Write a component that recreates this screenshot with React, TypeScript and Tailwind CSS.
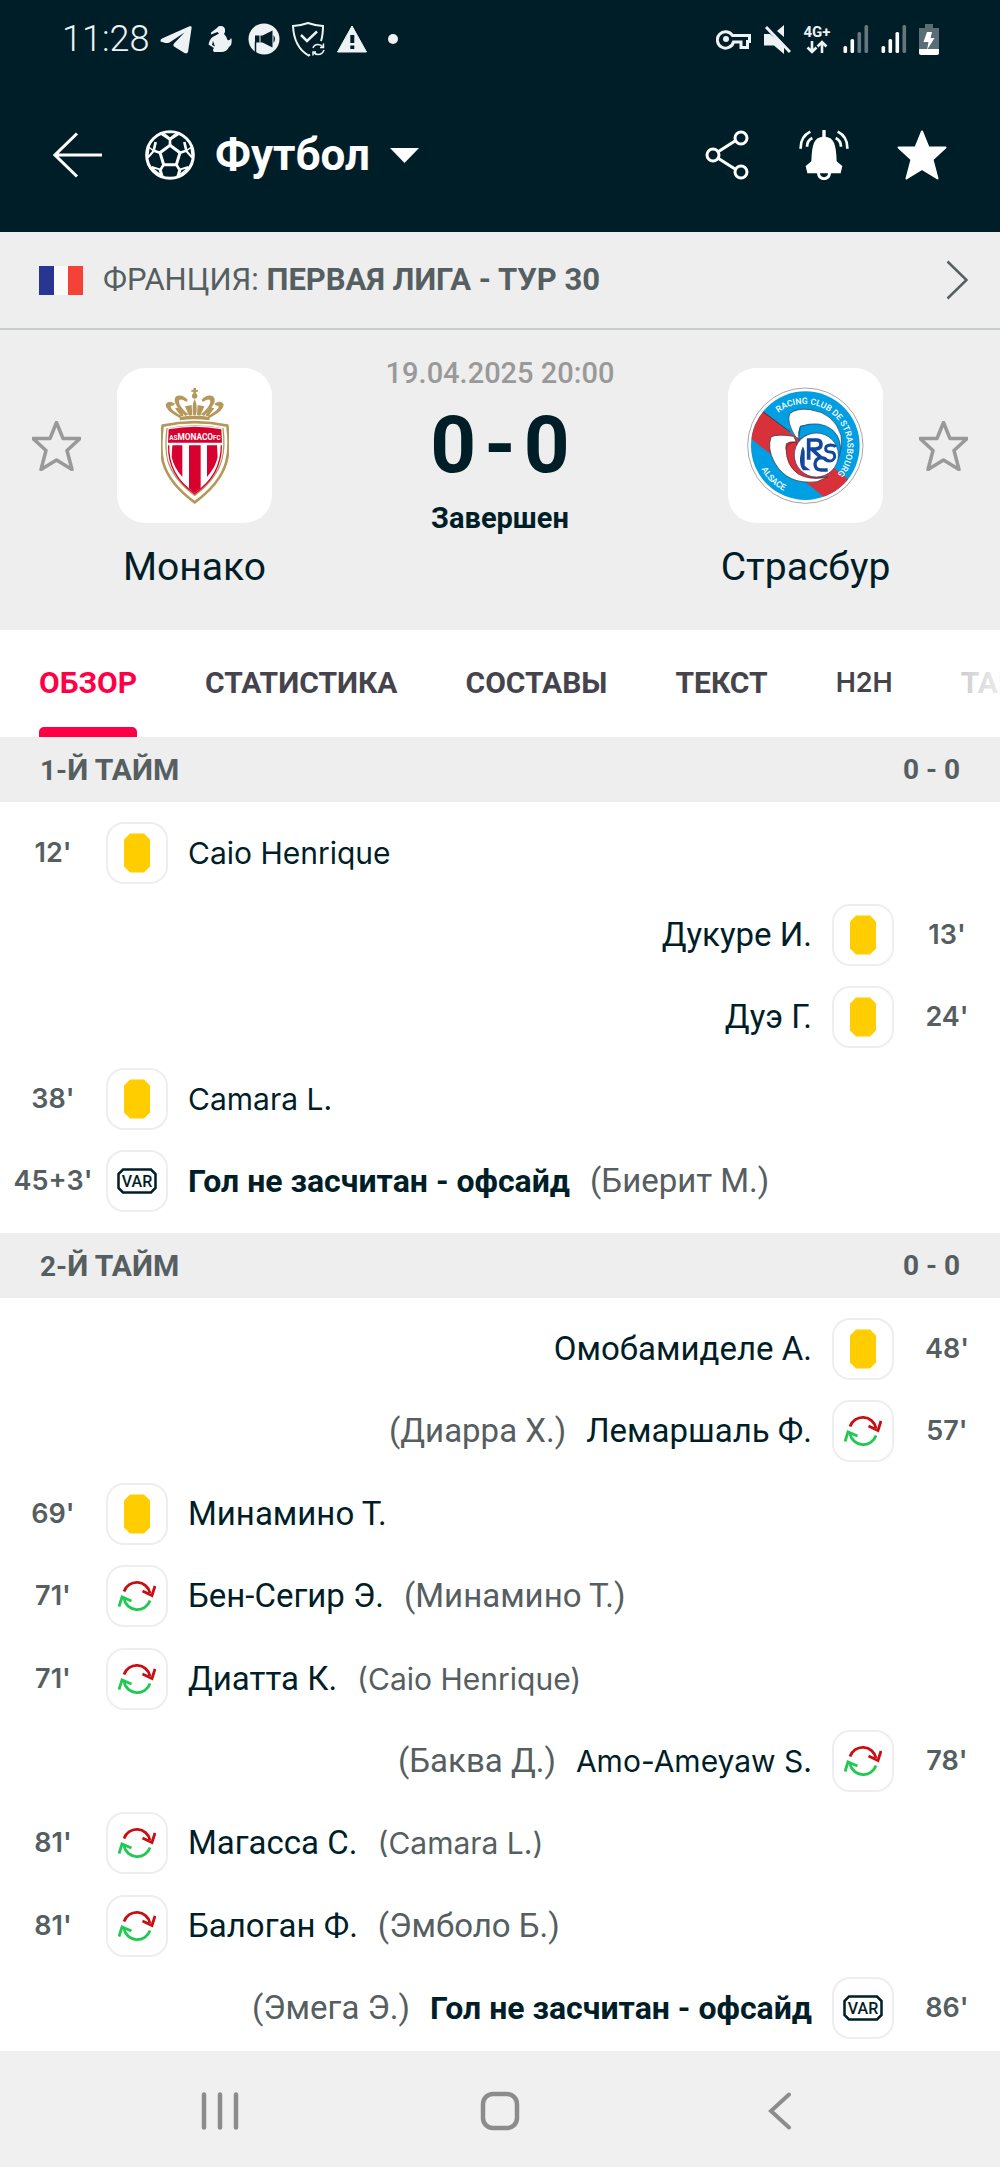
import { useState } from "react"

type Side = "home" | "away"
type Kind = "card" | "sub" | "var"

type MatchEvent = {
  side: Side
  time: string
  kind: Kind
  name: string
  extra?: string
}

const tabs = ["ОБЗОР", "СТАТИСТИКА", "СОСТАВЫ", "ТЕКСТ", "H2H", "ТАБЛИЦА"]

const firstHalf: MatchEvent[] = [
  { side: "home", time: "12'", kind: "card", name: "Caio Henrique" },
  { side: "away", time: "13'", kind: "card", name: "Дукуре И." },
  { side: "away", time: "24'", kind: "card", name: "Дуэ Г." },
  { side: "home", time: "38'", kind: "card", name: "Camara L." },
  { side: "home", time: "45+3'", kind: "var", name: "Гол не засчитан - офсайд", extra: "(Биерит М.)" },
]

const secondHalf: MatchEvent[] = [
  { side: "away", time: "48'", kind: "card", name: "Омобамиделе А." },
  { side: "away", time: "57'", kind: "sub", name: "Лемаршаль Ф.", extra: "(Диарра Х.)" },
  { side: "home", time: "69'", kind: "card", name: "Минамино Т." },
  { side: "home", time: "71'", kind: "sub", name: "Бен-Сегир Э.", extra: "(Минамино Т.)" },
  { side: "home", time: "71'", kind: "sub", name: "Диатта К.", extra: "(Caio Henrique)" },
  { side: "away", time: "78'", kind: "sub", name: "Amo-Ameyaw S.", extra: "(Баква Д.)" },
  { side: "home", time: "81'", kind: "sub", name: "Магасса С.", extra: "(Camara L.)" },
  { side: "home", time: "81'", kind: "sub", name: "Балоган Ф.", extra: "(Эмболо Б.)" },
  { side: "away", time: "86'", kind: "var", name: "Гол не засчитан - офсайд", extra: "(Эмега Э.)" },
]

const STAR = "M49 3 L62 35 L96 35 L70 59 L80 97 L49 78 L18 97 L28 59 L2 35 L36 35 Z"

// Latin names use a different face from Cyrillic ones
function textFace(text: string) {
  return /[А-Яа-я]/.test(text) ? "font-['Roboto',sans-serif] text-[33px]" : "font-['Inter',sans-serif] text-[30px]"
}

function Signal({ level }: { level: number }) {
  return (
    <svg viewBox="0 0 26 28" className="h-7 w-[26px]" fill="#fff">
      {[0, 1, 2, 3].map((i) => (
        <rect key={i} x={i * 7 + 0.5} y={21 - i * 7} width="3.6" height={7 + i * 7} rx="1.5" opacity={i < level ? 1 : 0.4} />
      ))}
    </svg>
  )
}

function StatusBar() {
  return (
    <div className="flex h-[78px] items-center justify-between pr-[61px] pl-[62px] text-[#eef2f5]">
      <div className="flex items-center gap-[10px]">
        <span className="text-[36px] font-light">11:28</span>
        <svg viewBox="0 0 34 34" className="h-[34px] w-[34px]" fill="currentColor">
          <path d="M1.500 19.500 Q1 17.500 3 16.500 L30.500 4.300 Q33.500 3.500 32.500 6.500 L29 30 Q28 32.300 25.500 31 L15 24.500 Q13.500 23 15 21.500 L25.500 10.500 L10.500 20.500 Q8 21.500 5.500 20.800 Z" />
        </svg>
        <svg viewBox="0 0 34 34" className="h-[34px] w-[34px]" fill="currentColor">
          <path d="M14 6 Q15 3.500 18 4 Q21.500 4 22 7.500 Q22.500 10 21 12 Q24 15 24.500 18 Q27 19 27.500 16.500 L28.500 16.500 Q29.500 23 26 25 Q24 30 18 30 L11 30 Q9 28 11 26 L5.500 22.500 Q7 15 12.500 13.500 L16 11.500 L14.500 10 L8 12.500 L8 10.500 Z" />
          <path d="M10 19 L9 23 L12 24.500 Z" fill="#001e28" />
        </svg>
        <svg viewBox="0 0 34 34" className="h-[34px] w-[34px]">
          <circle cx="17" cy="17" r="15.500" fill="currentColor" />
          <path d="M8 13.500 H12.500 V20.500 H8 Z M13.500 13.500 H15.500 L25.500 8.500 V25.500 L15.500 20.500 H13.500 Z" fill="#001e28" />
          <path d="M26.500 13 Q29.500 17 26.500 21 Z" fill="#001e28" />
          <path d="M8.500 20 V31" stroke="#001e28" strokeWidth="1.500" />
        </svg>
        <svg viewBox="0 0 34 36" className="h-9 w-[34px]" fill="none" stroke="currentColor" strokeWidth="2">
          <path d="M19 33.500 L17.500 34.500 Q3 26 2 5 Q10 4.500 17 2 Q24 4.500 32 5 Q32 14 30 20" />
          <path d="M10 14 L16 20 L26 10.500" strokeWidth="2.500" />
          <path d="M22 27 Q23 23.500 27 23.500 Q30 23.500 32 26 M33 29 Q31.500 33.500 27 33.500 Q24 33.500 22.500 31 M32.500 22.500 V26.500 H29 M22 34.500 V31 H25" strokeWidth="1.500" />
        </svg>
        <svg viewBox="0 0 34 34" className="h-[34px] w-[34px]">
          <path d="M17 4 L31.500 30 H2.500 Z" fill="currentColor" stroke="currentColor" strokeLinejoin="round" />
          <path d="M15.300 13 H19.300 V21 H15.300 Z M15.300 23.500 H19.300 V27 H15.300 Z" fill="#001e28" />
        </svg>
        <svg viewBox="0 0 28 28" className="h-7 w-7" fill="currentColor">
          <circle cx="14" cy="14" r="5" />
        </svg>
      </div>
      <div className="flex items-center gap-3">
        <svg viewBox="0 0 36 24" className="h-6 w-9" fill="none" stroke="currentColor" strokeWidth="3">
          <path d="M16.500 8.500 H33.500 V14.500 H31.500 V20.500 H25 V15 H17.500 A8.200 8.200 0 1 1 16.500 8.500 Z" />
          <circle cx="10" cy="12" r="3" fill="currentColor" stroke="none" />
        </svg>
        <svg viewBox="0 0 27 32" className="h-8 w-[27px]" fill="currentColor">
          <path d="M0 11 H6 L20 22 V31 L10 22.500 H0 Z M13 8 L20 2 V14 Z" />
          <path d="M2 4 L26 29" stroke="currentColor" strokeWidth="3" />
          <path d="M4.500 2.500 L27.500 26.500" stroke="#001e28" strokeWidth="1.500" />
        </svg>
        <div className="flex w-7 flex-col items-center">
          <span className="text-[15px] leading-4 font-bold">4G+</span>
          <svg viewBox="0 0 22 14" className="h-[14px] w-[22px]" fill="none" stroke="currentColor" strokeWidth="2.600">
            <path d="M6 1 V12 M1.500 7.500 L6 12 L10.500 7.500 M16 13 V2 M11.500 6.500 L16 2 L20.500 6.500" />
          </svg>
        </div>
        <Signal level={2} />
        <Signal level={3} />
        <svg viewBox="0 0 20 31" className="h-[31px] w-5">
          <path d="M6 0 H14 V4 H20 V30 H0 V4 H6 Z" fill="#5b6d74" />
          <path d="M0 25 H20 V29 Q20 31 18 31 H2 Q0 31 0 29 Z" fill="#fff" />
          <path d="M8 8 H13 L11.500 14 H15.500 L8 26 L9.500 18 H4.500 Z" fill="#fff" />
        </svg>
      </div>
    </div>
  )
}

function FootballIcon() {
  return (
    <svg viewBox="0 0 150 150" className="h-[50px] w-[50px]" fill="none" stroke="currentColor" strokeWidth="9">
      <circle cx="75" cy="75" r="70" />
      <path d="M75 46 L105 68 L94 104 H56 L45 68 Z" />
      <path d="M75 46 V28 L50 12 M75 28 L100 12 M105 68 L124 62 L118 36 M124 62 L142 82 M94 104 L104 120 L98 140 M104 120 L130 112 M56 104 L46 120 L52 140 M46 120 L20 112 M45 68 L26 62 L32 36 M26 62 L8 82" strokeWidth="8" />
      <path d="M55 8 H95 L75 25 Z M8 82 L12 52 L25 62 Z M142 82 L138 52 L125 62 Z M18 112 L42 118 L48 136 Z M132 112 L108 118 L102 136 Z" fill="#001e28" strokeWidth="4" />
    </svg>
  )
}

function AppBar() {
  return (
    <div className="flex h-[154px] items-center justify-between px-[53px] text-white">
      <div className="flex items-center">
        <button aria-label="Назад" className="mr-[42px]">
          <svg viewBox="0 0 50 46" className="h-[46px] w-[50px]" fill="none" stroke="currentColor" strokeWidth="3">
            <path d="M24 1.500 L2 23 L24 44.500 M2 23 H49" />
          </svg>
        </button>
        <button className="flex items-center gap-5">
          <FootballIcon />
          <span className="text-[44px] leading-[50px] font-bold">Футбол</span>
          <svg viewBox="0 0 29 15" className="h-[15px] w-[29px]" fill="currentColor">
            <path d="M0 0 H29 L14.500 15 Z" />
          </svg>
        </button>
      </div>
      <div className="flex items-center gap-12">
        <button aria-label="Поделиться">
          <svg viewBox="0 0 50 50" className="h-[50px] w-[50px]" fill="none" stroke="currentColor" strokeWidth="3">
            <path d="M17.500 21.500 L34 11 M17.500 28.500 L34 39" />
            <circle cx="12" cy="25" r="6" />
            <circle cx="40" cy="8" r="6" />
            <circle cx="40" cy="42" r="6" />
          </svg>
        </button>
        <button aria-label="Уведомления">
          <svg viewBox="0 0 150 150" className="h-[50px] w-[50px]" fill="none" stroke="currentColor" strokeWidth="9">
            <path d="M70 0 H80 V20 Q98 22 105 38 Q112 55 113 94 L130 108 L125 130 H25 L20 108 L37 94 Q38 55 45 38 Q52 22 70 20 Z" fill="currentColor" stroke="none" />
            <path d="M58 128 Q60 146 75 146 Q90 146 92 128" />
            <path d="M5 56 Q4 20 34 5 M24 50 Q24 32 40 24 M145 56 Q146 20 116 5 M126 50 Q126 32 110 24" strokeWidth="8" />
          </svg>
        </button>
        <button aria-label="В избранном">
          <svg viewBox="0 0 98 100" className="h-[50px] w-[50px]">
            <path d={STAR} fill="currentColor" stroke="currentColor" strokeWidth="4" strokeLinejoin="round" />
          </svg>
        </button>
      </div>
    </div>
  )
}

function MonacoCrest() {
  return (
    <svg viewBox="0 0 204 351" className="h-[117px] w-[68px]">
      <g fill="#b4975a">
        <path d="M97 3 H105 V9 H111 V14 H105 V20 H97 V14 H91 V9 H97 Z" />
        <circle cx="101" cy="27" r="8" />
        <path d="M101 36 Q111 56 105 85 H97 Q91 56 101 36 Z" />
        <path d="M55 92 Q12 70 14 52 Q22 38 42 50 Q38 58 30 56 Q24 66 62 87 Z" />
        <path d="M147 92 Q190 70 188 52 Q180 38 160 50 Q164 58 172 56 Q178 66 140 87 Z" />
        <path d="M73 87 Q28 44 46 28 Q62 20 80 38 Q78 48 68 40 Q54 34 54 44 Q54 58 82 82 Z" />
        <path d="M129 87 Q174 44 156 28 Q140 20 122 38 Q124 48 134 40 Q148 34 148 44 Q148 58 120 82 Z" />
        <path d="M72 58 L92 54 L94 84 L84 86 Z M130 58 L110 54 L108 84 L118 86 Z M42 64 L58 60 L68 86 L60 88 Z M160 64 L144 60 L134 86 L142 88 Z" />
        <path d="M55 90 Q101 82 147 90 L145 100 Q101 93 57 100 Z" />
      </g>
      <path d="M5 116 Q101 95 199 116 Q208 180 196 225 Q178 290 101 346 Q24 290 6 225 Q-4 180 5 116 Z" fill="#fff" stroke="#b4975a" strokeWidth="8" />
      <path d="M16 124 Q101 106 188 124 Q195 180 184 220 Q168 278 101 328 Q34 278 18 220 Q9 180 16 124 Z" fill="#b4975a" />
      <path d="M20 124 Q101 108 184 124 Q191 180 181 218 Q164 274 101 322 Q38 274 21 218 Q13 180 20 124 Z" fill="#fff" />
      <path d="M23 127 Q101 112 181 127 L183 167 H21 Z" fill="#d8002e" />
      <path d="M34 175 H64 V270 Q38 240 32 210 Z M84 175 H119 V304 L101 317 L84 304 Z M138 175 H168 L170 210 Q164 240 138 270 Z" fill="#d8002e" />
      <path d="M23 175 Q20 264 101 320 Q182 264 181 175" fill="none" stroke="#d8002e" strokeWidth="4" />
      <text x="102" y="159" textAnchor="middle" fill="#fff" fontWeight="700" fontFamily="Roboto">
        <tspan fontSize="19">AS</tspan>
        <tspan fontSize="25">MONACO</tspan>
        <tspan fontSize="19">FC</tspan>
      </text>
    </svg>
  )
}

function StrasbourgCrest() {
  return (
    <svg viewBox="0 0 351 351" className="h-[117px] w-[117px]">
      <defs>
        <clipPath id="disc">
          <circle cx="175" cy="176" r="163" />
        </clipPath>
        <path id="arcTop" d="M 94 77 A 128 128 0 1 1 250 282" />
        <path id="arcBottom" d="M 43 246 A 149 149 0 0 0 150 324" />
      </defs>
      <circle cx="175" cy="176" r="173" fill="#fff" stroke="#777" strokeWidth="2" />
      <g clipPath="url(#disc)">
        <rect width="351" height="351" fill="#009fe3" />
        <path d="M30 58 L320 290 L250 345 L0 145 Z" fill="#d8313a" />
        <path d="M49 75 L130 135" stroke="#222" strokeWidth="2" />
        <path d="M49 73 Q110 100 146 150 L134 80 L90 50 Z" fill="#009fe3" />
      </g>
      <path d="M146 150 Q118 105 128 80 Q150 62 190 68 Q262 78 282 145 Q290 190 262 230 Q278 170 255 138 Q220 100 160 118 Q152 135 156 155 Z" fill="#fff" stroke="#233" strokeWidth="2" />
      <path d="M160 118 Q220 98 258 130 Q288 160 278 205 L262 230 Q270 170 240 150 Q190 125 155 160 Z" fill="#009fe3" stroke="#1d3c7a" strokeWidth="2" />
      <path d="M140 148 Q90 140 72 150 Q60 185 82 225 Q120 295 210 284 L242 270 Q170 286 140 235 Q110 195 118 170 Q128 162 148 165 Z" fill="#fff" stroke="#233" strokeWidth="2" />
      <path d="M148 165 Q118 168 118 185 Q116 235 155 262 Q190 280 228 270 Q150 255 148 165 Z" fill="#d8313a" stroke="#622" strokeWidth="2" />
      <circle cx="208" cy="204" r="66" fill="#fff" stroke="#24407f" strokeWidth="2" />
      <g fill="none" stroke="#13479b" strokeWidth="11">
        <path d="M185 218 V159 H210 Q222 160 222 172 Q222 185 206 186 H194 L222 212" />
        <path d="M266 180 Q262 174 250 174 Q236 175 236 185 Q236 194 250 195 Q264 196 263 210 Q260 222 248 222 Q236 222 232 212" strokeWidth="9" />
        <path d="M242 249 H222 Q204 248 204 230 Q206 214 222 212 Q232 212 238 220" strokeWidth="10" />
      </g>
      <path d="M163 190 L168 178 L173 192 V236 L190 250 H168 Q158 238 159 214 Z" fill="#13479b" />
      <g fill="#fff" fontFamily="Roboto" fontWeight="500" fontSize="26">
        <text>
          <textPath href="#arcTop">RACING CLUB DE STRASBOURG</textPath>
        </text>
        <text>
          <textPath href="#arcBottom">ALSACE</textPath>
        </text>
      </g>
    </svg>
  )
}

function FavouriteButton({ team }: { team: string }) {
  const [active, setActive] = useState(false)
  return (
    <button aria-label={`Добавить в избранное: ${team}`} onClick={() => setActive(!active)}>
      <svg viewBox="0 0 98 100" className="h-[50px] w-[49px]">
        <path d={STAR} fill={active ? "#999" : "none"} stroke="#999" strokeWidth="7" strokeLinejoin="round" />
      </svg>
    </button>
  )
}

function MatchSummary() {
  return (
    <section className="grid grid-cols-[49px_155px_1fr_155px_49px] items-center gap-x-9 gap-y-2 px-8 pt-[25px] pb-10 text-[#001e28]">
      <FavouriteButton team="Монако" />
      <div className="flex h-[155px] items-center justify-center rounded-[28px] bg-white">
        <MonacoCrest />
      </div>
      <div className="flex flex-col items-center whitespace-nowrap">
        <time className="text-[29px] leading-9 font-medium text-[#999]">19.04.2025 20:00</time>
        <div className="my-[6px] flex gap-2 text-[80px] leading-[97px] font-bold">
          <span>0</span>
          <span>-</span>
          <span>0</span>
        </div>
        <span className="text-[29px] leading-9 font-bold">Завершен</span>
      </div>
      <div className="flex h-[155px] items-center justify-center rounded-[28px] bg-white">
        <StrasbourgCrest />
      </div>
      <FavouriteButton team="Страсбур" />
      <h2 className="col-start-2 justify-self-center text-[39px] leading-[46px] whitespace-nowrap">Монако</h2>
      <h2 className="col-start-4 justify-self-center text-[39px] leading-[46px] whitespace-nowrap">Страсбур</h2>
    </section>
  )
}

function Tabs() {
  const [current, setCurrent] = useState("ОБЗОР")
  return (
    <nav className="relative flex h-[107px] gap-[68px] overflow-hidden bg-white px-[39px]">
      {tabs.map((tab) => (
        <button
          key={tab}
          onClick={() => setCurrent(tab)}
          className={`flex shrink-0 flex-col items-center justify-between pt-[34px] text-[30px] leading-[38px] font-bold ${tab === current ? "text-[#ff0046]" : "text-[#45444c]"}`}
        >
          <span className={tab === "H2H" ? "font-['Inter',sans-serif] text-[27px] font-semibold" : ""}>{tab}</span>
          <span className={`h-[10px] w-full rounded-t-[5px] ${tab === current ? "bg-[#ff0046]" : ""}`} />
        </button>
      ))}
      <div className="pointer-events-none absolute inset-y-0 right-0 w-[70px] bg-linear-to-r from-white/60 to-white/90" />
    </nav>
  )
}

function EventIcon({ kind }: { kind: Kind }) {
  return (
    <span className="flex h-[62px] w-[62px] shrink-0 items-center justify-center rounded-[18px] border-2 border-[#eee] bg-white">
      {kind === "card" && (
        <svg viewBox="0 0 26 40" className="h-10 w-[26px]" fill="#ffcd00">
          <path d="M6 0.500 H20 L26 6.500 V33.500 L20 39.500 H6 L0 33.500 V6.500 Z" />
        </svg>
      )}
      {kind === "sub" && (
        <svg viewBox="0 0 38 32" className="h-8 w-[38px]" fill="none" strokeWidth="2.800">
          <path d="M6 11.500 A13.500 13.500 0 0 1 32 13 M24.500 11 L34 15.500 L37 6" stroke="#c80e13" />
          <path d="M32 20.500 A13.500 13.500 0 0 1 6 19 M13.500 21 L4 17 L1 26.500" stroke="#21c852" />
        </svg>
      )}
      {kind === "var" && (
        <svg viewBox="0 0 40 26" className="h-[26px] w-10">
          <path d="M6 1.500 H34 L38.500 6 V20 L34 24.500 H6 L1.500 20 V6 Z" fill="none" stroke="#001e28" strokeWidth="2.500" />
          <text x="20" y="18.500" textAnchor="middle" fontFamily="Roboto" fontSize="16" fontWeight="500" fill="#001e28">VAR</text>
        </svg>
      )}
    </span>
  )
}

function EventRow({ event }: { event: MatchEvent }) {
  return (
    <li className={`flex h-[82px] items-center leading-[42px] whitespace-nowrap ${event.side === "away" ? "flex-row-reverse" : ""}`}>
      <span className="w-[106px] shrink-0 text-center font-['Inter',sans-serif] text-[27px] font-semibold text-[#555e61]">{event.time}</span>
      <EventIcon kind={event.kind} />
      <span className={`mx-5 text-[#001e28] ${event.kind === "var" ? "text-[32px] font-bold" : textFace(event.name)}`}>{event.name}</span>
      {event.extra && <span className={`text-[#555e61] ${textFace(event.extra)}`}>{event.extra}</span>}
    </li>
  )
}

function HalfHeader({ half, score }: { half: number; score: string }) {
  return (
    <h3 className="flex h-[65px] items-center justify-between bg-[#eee] px-10 text-[30px] font-bold text-[#555e61]">
      <span>
        <span className="text-[28px]">{half}-</span>Й ТАЙМ
      </span>
      <span className="text-[28px]">{score}</span>
    </h3>
  )
}

function SystemNav() {
  return (
    <nav className="flex h-[116px] items-center bg-[#f0f0f0] px-20 pt-1 text-[#8c8c8c]">
      <button aria-label="Недавние" className="flex flex-1 justify-center">
        <svg viewBox="0 0 38 38" className="h-[38px] w-[38px]" stroke="currentColor" strokeWidth="4.500" strokeLinecap="round">
          <path d="M3 2.500 V35.500 M19 2.500 V35.500 M35 2.500 V35.500" />
        </svg>
      </button>
      <button aria-label="Домой" className="flex flex-1 justify-center">
        <svg viewBox="0 0 40 40" className="h-10 w-10" fill="none" stroke="currentColor" strokeWidth="4.500">
          <rect x="3" y="3" width="34" height="34" rx="10" />
        </svg>
      </button>
      <button aria-label="Назад" className="flex flex-1 justify-center">
        <svg viewBox="0 0 24 38" className="h-[38px] w-6" fill="none" stroke="currentColor" strokeWidth="4" strokeLinecap="round">
          <path d="M21 2.500 L3 19 L21 35.500" />
        </svg>
      </button>
    </nav>
  )
}

export default function App() {
  return (
    <div className="flex min-h-screen flex-col bg-white font-['Roboto',sans-serif]">
      <header className="bg-[#001e28]">
        <StatusBar />
        <AppBar />
      </header>
      <main className="flex flex-1 flex-col">
        <div className="bg-[#eee]">
          <a href="#league" className="flex h-[98px] items-center border-b-2 border-[#c8cdcd] pr-8 pl-[39px] text-[31px] text-[#555e61]">
            <svg viewBox="0 0 44 29" className="mr-5 h-[29px] w-11">
              <rect width="15" height="29" fill="#283593" />
              <rect x="15" width="14" height="29" fill="#fafafa" />
              <rect x="29" width="15" height="29" fill="#f44336" />
            </svg>
            <span>
              ФРАНЦИЯ: <b>ПЕРВАЯ ЛИГА - ТУР 30</b>
            </span>
            <svg viewBox="0 0 22 40" className="ml-auto h-10 w-[22px]" fill="none" stroke="currentColor" strokeWidth="2.500">
              <path d="M1.500 1.500 L20.500 20 L1.500 38.500" />
            </svg>
          </a>
          <MatchSummary />
        </div>
        <Tabs />
        <HalfHeader half={1} score="0 - 0" />
        <ul className="pt-[10px] pb-[11px]">
          {firstHalf.map((event) => (
            <EventRow key={event.time + event.name} event={event} />
          ))}
        </ul>
        <HalfHeader half={2} score="0 - 0" />
        <ul className="flex flex-1 flex-col justify-between pt-[10px] pb-[2px]">
          {secondHalf.map((event) => (
            <EventRow key={event.time + event.name} event={event} />
          ))}
        </ul>
      </main>
      <SystemNav />
    </div>
  )
}
